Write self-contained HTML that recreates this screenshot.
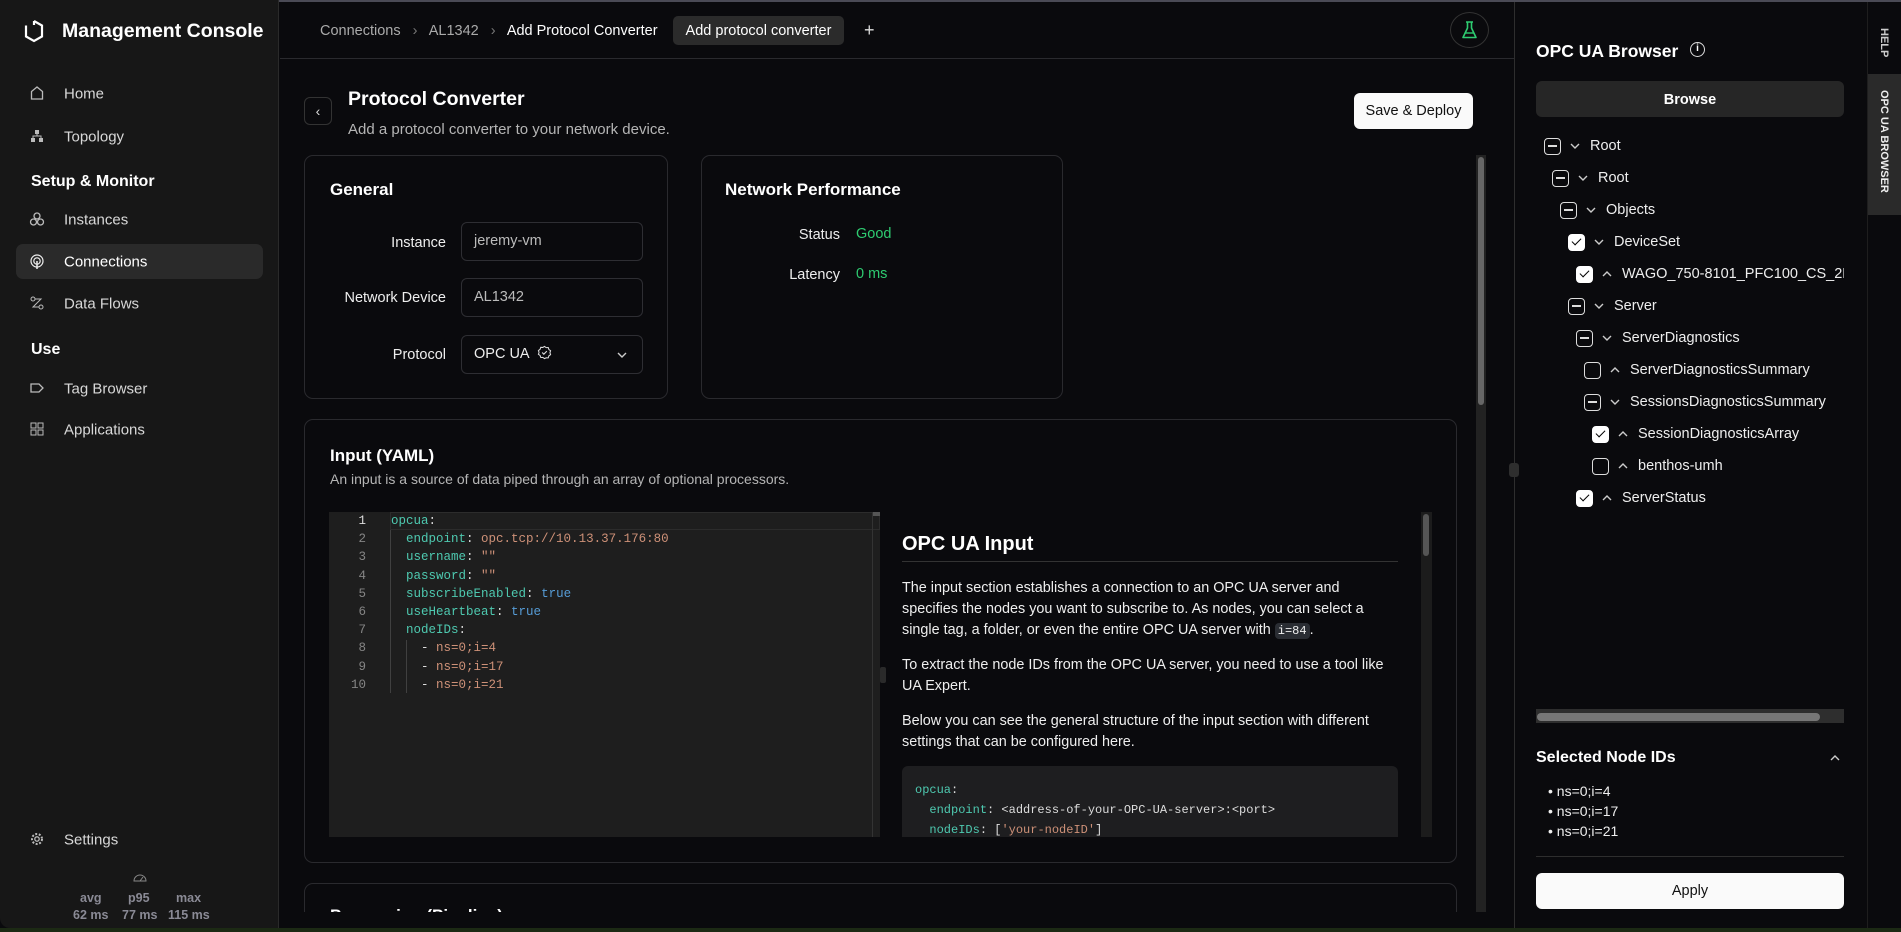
<!DOCTYPE html>
<html><head><meta charset="utf-8"><style>
*{box-sizing:border-box;margin:0;padding:0}
body{width:1901px;height:932px;overflow:hidden;background:#0a0a0d;font-family:"Liberation Sans",sans-serif;color:#fff;position:relative}
.a{position:absolute;white-space:nowrap}
.side{left:0;top:0;width:279px;height:928px;background:#171717;border-right:1px solid #2a2a2a;border-bottom-left-radius:10px}
.nav{position:absolute;left:64px;font-size:15px;color:#d8d8d8;transform:translateY(-50%)}
.ico{position:absolute;left:29px;width:16px;height:16px;transform:translateY(-50%)}
.sec{position:absolute;left:31px;font-size:16px;font-weight:bold;transform:translateY(-50%)}
.card{position:absolute;border:1px solid #2a2a2e;border-radius:9px;background:#0a0a0d}
.lbl{position:absolute;right:0;font-size:14.5px;color:#eee;transform:translateY(-50%);text-align:right}
.inp{position:absolute;left:461px;width:182px;height:39px;border:1px solid #2e2e33;border-radius:6px;font-size:14.5px;color:#bbb;padding:0 12px;line-height:37px}
.code{font-family:"Liberation Mono",monospace;font-size:12.5px}
.k{color:#4ec9b0}.s{color:#ce9178}.b{color:#569cd6}
.row{position:absolute;height:20px;display:flex;align-items:center;font-size:14.5px;color:#eee;white-space:nowrap}
.cb{width:17px;height:17px;border:1.5px solid #ddd;border-radius:4px;margin-right:8px;position:relative;flex:none}
.cb.m::after{content:"";position:absolute;left:3px;right:3px;top:6.5px;height:1.5px;background:#ddd}
.cb.c{background:#fff;border-color:#fff}
.cb.c::after{content:"";position:absolute;left:5px;top:1.5px;width:4px;height:8px;border:solid #000;border-width:0 1.8px 1.8px 0;transform:rotate(45deg)}
.ch{width:12px;height:12px;margin-right:9px;flex:none}
</style></head><body>
<svg width="0" height="0" style="position:absolute"><defs>
<symbol id="dn" viewBox="0 0 12 12"><path d="M2 4l4 4 4-4" fill="none" stroke="#ccc" stroke-width="1.4"/></symbol>
<symbol id="up" viewBox="0 0 12 12"><path d="M2 8l4-4 4 4" fill="none" stroke="#ccc" stroke-width="1.4"/></symbol>
</defs></svg>
<div class="a" style="left:0;top:0;width:1901px;height:2px;background:#4a4a55"></div>

<!-- sidebar -->
<div class="a side"></div>
<svg class="a" style="left:24px;top:19px" width="20" height="24" viewBox="0 0 20 24"><path d="M10 2 L18 6.5 V17.5 L10 22 L2 17.5 V6.5" fill="none" stroke="#fff" stroke-width="2.2"/><path d="M10 2 V6" stroke="#fff" stroke-width="2.2"/></svg>
<div class="a" style="left:62px;top:20px;font-size:19.5px;font-weight:bold">Management Console</div>
<div class="a" style="left:16px;top:244px;width:247px;height:35px;background:#2a2a2a;border-radius:7px"></div>
<svg class="ico" style="top:93px" viewBox="0 0 16 16"><path d="M2.5 14V6.5L8 2l5.5 4.5V14z" fill="none" stroke="#bbb" stroke-width="1.3"/></svg>
<div class="nav" style="top:94px">Home</div>
<svg class="ico" style="top:136px" viewBox="0 0 16 16"><rect x="6" y="2" width="4" height="4" fill="#bbb"/><rect x="2" y="10" width="4" height="4" fill="#bbb"/><rect x="10" y="10" width="4" height="4" fill="#bbb"/><path d="M8 6v2M4 10V8h8v2" stroke="#bbb" fill="none"/></svg>
<div class="nav" style="top:137px">Topology</div>
<div class="sec" style="top:182px">Setup &amp; Monitor</div>
<svg class="ico" style="top:219px" viewBox="0 0 16 16"><circle cx="8" cy="5" r="3" fill="none" stroke="#bbb" stroke-width="1.3"/><circle cx="4.5" cy="11" r="3" fill="none" stroke="#bbb" stroke-width="1.3"/><circle cx="11.5" cy="11" r="3" fill="none" stroke="#bbb" stroke-width="1.3"/></svg>
<div class="nav" style="top:220px">Instances</div>
<svg class="ico" style="top:262px" viewBox="0 0 16 16"><circle cx="8" cy="7" r="6" fill="none" stroke="#eee" stroke-width="1.2"/><circle cx="8" cy="7" r="3.2" fill="none" stroke="#eee" stroke-width="1.2"/><path d="M8 7v8" stroke="#eee" stroke-width="1.5"/></svg>
<div class="nav" style="top:262px;color:#fff">Connections</div>
<svg class="ico" style="top:303px" viewBox="0 0 16 16"><circle cx="4" cy="4" r="2" fill="none" stroke="#bbb"/><circle cx="12" cy="12" r="2" fill="none" stroke="#bbb"/><path d="M6 4h6L4 12h6" fill="none" stroke="#bbb"/></svg>
<div class="nav" style="top:304px">Data Flows</div>
<div class="sec" style="top:350px">Use</div>
<svg class="ico" style="top:388px" viewBox="0 0 16 16"><path d="M2 4h8l4 4-4 4H2z" fill="none" stroke="#bbb" stroke-width="1.3"/></svg>
<div class="nav" style="top:389px">Tag Browser</div>
<svg class="ico" style="top:429px" viewBox="0 0 16 16"><rect x="2" y="2" width="5" height="5" fill="none" stroke="#bbb"/><rect x="9" y="2" width="5" height="5" fill="none" stroke="#bbb"/><rect x="2" y="9" width="5" height="5" fill="none" stroke="#bbb"/><rect x="9" y="9" width="5" height="5" fill="none" stroke="#bbb"/></svg>
<div class="nav" style="top:430px">Applications</div>
<svg class="ico" style="top:839px" viewBox="0 0 16 16"><circle cx="8" cy="8" r="5" fill="none" stroke="#bbb" stroke-width="2" stroke-dasharray="2 1.6"/><circle cx="8" cy="8" r="2.2" fill="none" stroke="#bbb" stroke-width="1.3"/></svg>
<div class="nav" style="top:840px">Settings</div>
<svg class="a" style="left:133px;top:872px" width="14" height="10" viewBox="0 0 14 10"><path d="M1 9A6 6 0 0 1 13 9z" fill="none" stroke="#888"/><path d="M7 9l3-4" stroke="#888"/></svg>
<div class="a" style="left:70px;top:890px;width:150px;font-size:12.5px;color:#8a8a95;font-weight:bold;line-height:17px">
<span style="position:absolute;left:10px;top:0">avg</span><span style="position:absolute;left:58px;top:0">p95</span><span style="position:absolute;left:106px;top:0">max</span>
<span style="position:absolute;left:3px;top:17px">62 ms</span><span style="position:absolute;left:52px;top:17px">77 ms</span><span style="position:absolute;left:98px;top:17px">115 ms</span></div>

<!-- header -->
<div class="a" style="left:280px;top:58px;width:1234px;height:1px;background:#2a2a2e"></div>
<div class="a" style="left:320px;top:23px;font-size:14.5px;color:#aaa">Connections <span style="color:#777;margin:0 8px">›</span> AL1342 <span style="color:#777;margin:0 8px">›</span> <span style="color:#fff">Add Protocol Converter</span></div>
<div class="a" style="left:673px;top:16px;width:171px;height:29px;background:#2b2b2b;border-radius:5px;font-size:14.5px;line-height:30px;text-align:center">Add protocol converter</div>
<div class="a" style="left:864px;top:20px;font-size:18px;color:#ddd">+</div>
<div class="a" style="left:1450px;top:12px;width:39px;height:36px;border:1px solid #333;border-radius:50%"></div>
<svg class="a" style="left:1460px;top:20px" width="19" height="20" viewBox="0 0 19 20"><path d="M6 2h7M7.5 2v6L3 17.5h13L11.5 8V2" fill="none" stroke="#2ecc71" stroke-width="1.6" stroke-linejoin="round"/><path d="M5 13h9" stroke="#2ecc71" stroke-width="1.4"/></svg>

<!-- title -->
<div class="a" style="left:304px;top:97px;width:28px;height:28px;border:1px solid #333;border-radius:6px;text-align:center;line-height:26px;color:#ddd;font-size:14px">‹</div>
<div class="a" style="left:348px;top:88px;font-size:19.5px;font-weight:bold">Protocol Converter</div>
<div class="a" style="left:348px;top:121px;font-size:15px;color:#b5b5b5">Add a protocol converter to your network device.</div>
<div class="a" style="left:1354px;top:93px;width:119px;height:36px;background:#fafafa;border-radius:6px;color:#111;font-size:14.5px;line-height:36px;text-align:center">Save &amp; Deploy</div>

<!-- general card -->
<div class="card" style="left:304px;top:155px;width:364px;height:244px"></div>
<div class="a" style="left:330px;top:180px;font-size:17px;font-weight:bold">General</div>
<div class="a" style="left:0;top:0;width:446px;height:400px">
<div class="lbl" style="top:243px">Instance</div>
<div class="lbl" style="top:298px">Network Device</div>
<div class="lbl" style="top:355px">Protocol</div></div>
<div class="inp" style="top:222px">jeremy-vm</div>
<div class="inp" style="top:278px">AL1342</div>
<div class="inp" style="top:335px;color:#eee">OPC UA <svg width="15" height="15" viewBox="0 0 16 16" style="vertical-align:-2px;margin-left:4px"><path d="M8 1.5l1.8 1.3 2.2-.1.7 2.1 1.8 1.3-.7 2.1.7 2.1-1.8 1.3-.7 2.1-2.2-.1L8 14.5l-1.8-1.3-2.2.1-.7-2.1L1.5 9.9 2.2 8 1.5 5.9l1.8-1.3.7-2.1 2.2.1z" fill="none" stroke="#ddd" stroke-width="1.1"/><path d="M5.5 8l1.8 1.8 3.2-3.3" fill="none" stroke="#ddd" stroke-width="1.2"/></svg><svg width="12" height="12" style="position:absolute;right:14px;top:13px"><use href="#dn"/></svg></div>

<!-- network card -->
<div class="card" style="left:701px;top:155px;width:362px;height:244px"></div>
<div class="a" style="left:725px;top:180px;font-size:17px;font-weight:bold">Network Performance</div>
<div class="a" style="left:0;top:0;width:840px;height:400px"><div class="lbl" style="top:235px">Status</div><div class="lbl" style="top:275px">Latency</div></div>
<div class="a" style="left:856px;top:226px;font-size:14.5px;color:#2ecc71">Good</div>
<div class="a" style="left:856px;top:266px;font-size:14.5px;color:#2ecc71">0 ms</div>

<!-- input card -->
<div class="card" style="left:304px;top:419px;width:1153px;height:444px"></div>
<div class="a" style="left:330px;top:446px;font-size:17px;font-weight:bold">Input (YAML)</div>
<div class="a" style="left:330px;top:471px;font-size:14px;color:#b5b5b5">An input is a source of data piped through an array of optional processors.</div>
<div class="a" style="left:329px;top:512px;width:551px;height:325px;background:#1e1e1e"></div>
<div class="a" style="left:390px;top:512px;width:490px;height:18px;border:1px solid #2c2c2c"></div>
<div class="a" style="left:872px;top:512px;width:1px;height:325px;background:#333"></div>
<div class="a" style="left:873px;top:512px;width:7px;height:4px;background:#555"></div>
<div class="a" style="left:390px;top:530px;width:1px;height:163px;background:#404040"></div>
<div class="a" style="left:406px;top:640px;width:1px;height:53px;background:#404040"></div>
<div class="a code" style="left:340px;top:512px;width:26px;text-align:right;line-height:18.2px;color:#858585;white-space:pre"><span style="color:#ddd">1</span>
2
3
4
5
6
7
8
9
10</div>
<div class="a code" style="left:391px;top:512px;line-height:18.2px;white-space:pre;color:#ddd"><span class="k">opcua</span>:
  <span class="k">endpoint</span>: <span class="s">opc.tcp://10.13.37.176:80</span>
  <span class="k">username</span>: <span class="s">""</span>
  <span class="k">password</span>: <span class="s">""</span>
  <span class="k">subscribeEnabled</span>: <span class="b">true</span>
  <span class="k">useHeartbeat</span>: <span class="b">true</span>
  <span class="k">nodeIDs</span>:
    - <span class="s">ns=0;i=4</span>
    - <span class="s">ns=0;i=17</span>
    - <span class="s">ns=0;i=21</span></div>
<div class="a" style="left:880px;top:667px;width:6px;height:16px;background:#2a2a2a;border-radius:2px"></div>
<div class="a" style="left:902px;top:533px;font-size:20px;font-weight:bold">OPC UA Input</div>
<div class="a" style="left:902px;top:561px;width:496px;height:1px;background:#333"></div>
<div class="a" style="left:902px;top:578px;width:486px;font-size:14.4px;line-height:20.8px;white-space:normal;color:#eee">
<p>The input section establishes a connection to an OPC UA server and specifies the nodes you want to subscribe to. As nodes, you can select a single tag, a folder, or even the entire OPC UA server with <span class="code" style="background:#2a2d33;padding:1px 3px;border-radius:4px;font-size:12px">i=84</span>.</p>
<p style="margin-top:14px">To extract the node IDs from the OPC UA server, you need to use a tool like UA Expert.</p>
<p style="margin-top:14px">Below you can see the general structure of the input section with different settings that can be configured here.</p></div>
<div class="a" style="left:902px;top:766px;width:496px;height:71px;background:#1e1e20;border-radius:6px 6px 0 0;overflow:hidden">
<div class="code" style="position:absolute;left:13px;top:14px;font-size:12px;line-height:20px;white-space:pre;color:#ddd"><span class="k">opcua</span>:
  <span class="k">endpoint</span>: &lt;address-of-your-OPC-UA-server&gt;:&lt;port&gt;
  <span class="k">nodeIDs</span>: [<span class="s">'your-nodeID'</span>]</div></div>
<div class="a" style="left:1421px;top:512px;width:11px;height:325px;background:#1c1c1c"></div>
<div class="a" style="left:1423px;top:514px;width:6px;height:42px;background:#555;border-radius:3px"></div>

<!-- processing card -->
<div class="a" style="left:280px;top:870px;width:1234px;height:42px;overflow:hidden">
<div class="card" style="left:24px;top:13px;width:1153px;height:80px"></div>
<div class="a" style="left:50px;top:36px;font-size:17px;font-weight:bold">Processing (Pipeline)</div>
</div>

<!-- main scrollbar -->
<div class="a" style="left:1476px;top:155px;width:10px;height:757px;background:#222"></div>
<div class="a" style="left:1478px;top:157px;width:6px;height:248px;background:#666;border-radius:3px"></div>

<!-- right panel -->
<div class="a" style="left:1514px;top:2px;width:1px;height:926px;background:#2e2e2e"></div>
<div class="a" style="left:1509px;top:463px;width:10px;height:14px;background:#2e2e2e;border-radius:3px"></div>
<div class="a" style="left:1536px;top:41px;font-size:17.5px;font-weight:bold">OPC UA Browser</div>
<div class="a" style="left:1690px;top:42px;width:15px;height:15px;border:1.4px solid #ddd;border-radius:50%;font-size:10px;text-align:center;line-height:12px;font-weight:bold">i</div>
<div class="a" style="left:1536px;top:81px;width:308px;height:36px;background:#262626;border-radius:6px;font-size:14.5px;font-weight:bold;line-height:38px;text-align:center">Browse</div>

<div class="row" style="left:1544px;top:136px"><span class="cb m"></span><svg class="ch"><use href="#dn"/></svg>Root</div>
<div class="row" style="left:1552px;top:168px"><span class="cb m"></span><svg class="ch"><use href="#dn"/></svg>Root</div>
<div class="row" style="left:1560px;top:200px"><span class="cb m"></span><svg class="ch"><use href="#dn"/></svg>Objects</div>
<div class="row" style="left:1568px;top:232px"><span class="cb c"></span><svg class="ch"><use href="#dn"/></svg>DeviceSet</div>
<div class="row" style="left:1576px;top:264px;width:268px;overflow:hidden"><span class="cb c"></span><svg class="ch"><use href="#up"/></svg>WAGO_750-8101_PFC100_CS_2ETH</div>
<div class="row" style="left:1568px;top:296px"><span class="cb m"></span><svg class="ch"><use href="#dn"/></svg>Server</div>
<div class="row" style="left:1576px;top:328px"><span class="cb m"></span><svg class="ch"><use href="#dn"/></svg>ServerDiagnostics</div>
<div class="row" style="left:1584px;top:360px"><span class="cb"></span><svg class="ch"><use href="#up"/></svg>ServerDiagnosticsSummary</div>
<div class="row" style="left:1584px;top:392px"><span class="cb m"></span><svg class="ch"><use href="#dn"/></svg>SessionsDiagnosticsSummary</div>
<div class="row" style="left:1592px;top:424px"><span class="cb c"></span><svg class="ch"><use href="#up"/></svg>SessionDiagnosticsArray</div>
<div class="row" style="left:1592px;top:456px"><span class="cb"></span><svg class="ch"><use href="#up"/></svg>benthos-umh</div>
<div class="row" style="left:1576px;top:488px"><span class="cb c"></span><svg class="ch"><use href="#up"/></svg>ServerStatus</div>

<div class="a" style="left:1536px;top:709px;width:308px;height:14px;background:#2e2e2e"></div>
<div class="a" style="left:1537px;top:713px;width:283px;height:8px;background:#777;border-radius:4px"></div>
<div class="a" style="left:1536px;top:749px;font-size:16px;font-weight:bold">Selected Node IDs</div>
<svg class="a" style="left:1829px;top:752px" width="12" height="12"><use href="#up"/></svg>
<div class="a" style="left:1548px;top:781px;font-size:14px;line-height:20px;color:#eee">• ns=0;i=4<br>• ns=0;i=17<br>• ns=0;i=21</div>
<div class="a" style="left:1536px;top:856px;width:308px;height:1px;background:#2e2e2e"></div>
<div class="a" style="left:1536px;top:873px;width:308px;height:36px;background:#fafafa;border-radius:6px;color:#111;font-size:14.5px;line-height:37px;text-align:center">Apply</div>

<div class="a" style="left:1867px;top:2px;width:1px;height:926px;background:#1e1e1e"></div>
<div class="a" style="left:1868px;top:74px;width:33px;height:141px;background:#2a2a2a"></div>
<div class="a" style="left:1878px;top:28px;writing-mode:vertical-rl;font-size:11px;font-weight:bold;color:#ccc">HELP</div>
<div class="a" style="left:1878px;top:90px;writing-mode:vertical-rl;font-size:11px;font-weight:bold;color:#eee">OPC UA BROWSER</div>
<div class="a" style="left:0;top:928px;width:1901px;height:4px;background:#1c2a14"></div>
</body></html>
